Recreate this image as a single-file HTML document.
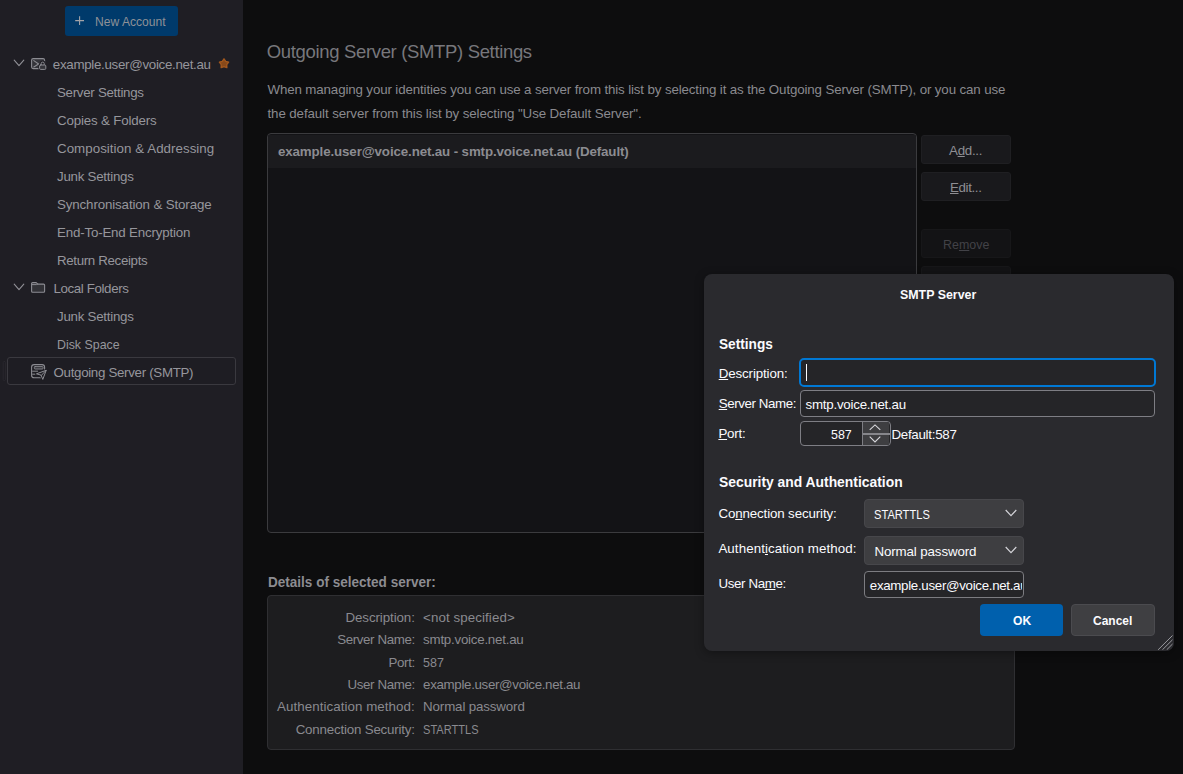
<!DOCTYPE html>
<html><head><meta charset="utf-8"><title>Account Settings</title>
<style>
html,body{margin:0;padding:0;}
body{width:1183px;height:774px;overflow:hidden;background:#0d0d0e;position:relative;font-family:"Liberation Sans",sans-serif;}
.t{position:absolute;white-space:nowrap;line-height:1;font-family:"Liberation Sans",sans-serif;transform-origin:0 50%;display:inline-block;}
.t u{text-decoration:underline;text-underline-offset:1px;text-decoration-thickness:1px;}
.abs{position:absolute;box-sizing:border-box;}
#sidebar{left:0;top:0;width:243px;height:774px;background:#1f1e24;}
#newacct{left:65px;top:6px;width:113px;height:30px;background:#003a6b;border-radius:3px;}
#selrow{left:7px;top:357px;width:229px;height:28px;border:1px solid #3a393f;border-radius:3px;background:#1e1d23;}
#listbox{left:267px;top:133px;width:650px;height:400px;border:1px solid #3b3b3e;border-radius:4px;background:#131316;overflow:hidden;}
#listrow{left:0;top:1px;width:650px;height:33px;background:#1b1b1e;}
.btn{left:921px;width:90px;height:29px;background:#19191c;border:1px solid #1f1f22;border-radius:3px;}
.btn.dis{background:#131315;border-color:#171719;}
#details{left:267px;top:595px;width:748px;height:155px;border:1px solid #2f2f32;border-radius:4px;background:#1d1d1f;}
#dialog{left:704px;top:274px;width:470px;height:377px;background:#2a2a2e;border-radius:8px;box-shadow:0 2px 10px 0 rgba(0,0,0,.35);overflow:hidden;}
.inp{background:#252528;border:1px solid #7e7e84;border-radius:4px;}
.sel{background:#3e3e41;border:1px solid #47474b;border-radius:4px;}
</style></head>
<body>
<div id="sidebar" class="abs"></div>
<div id="newacct" class="abs"></div>
<div id="selrow" class="abs"></div>
<svg class="abs" style="left:0;top:0" width="243" height="400" viewBox="0 0 243 400" fill="none" stroke-linecap="round" stroke-linejoin="round">
  <!-- plus -->
  <path d="M75.2 20.6 H84 M79.6 16.2 V25" stroke="#a3a3a8" stroke-width="1.1" stroke-linecap="butt"/>
  <!-- chevrons -->
  <path d="M14.2 60.2 L19 65.6 L23.8 60.2" stroke="#909096" stroke-width="1.1"/>
  <path d="M14.2 284.2 L19 289.6 L23.8 284.2" stroke="#909096" stroke-width="1.1"/>
  <!-- account icon -->
  <rect x="31.6" y="58.6" width="13" height="10" rx="1.6" fill="#34343a" stroke="#8c8c92" stroke-width="1.1"/>
  <path d="M33.8 60.6 L38.6 64 L33.8 67" stroke="#8c8c92" stroke-width="1.1"/>
  <path d="M41.2 65 V63.6 a1.5 1.5 0 0 1 3 0 V65" stroke="#1f1e24" stroke-width="3"/>
  <rect x="39.6" y="65" width="6.2" height="4.4" rx="1" fill="#34343a" stroke="#1f1e24" stroke-width="2.4"/>
  <path d="M41.2 65 V63.6 a1.5 1.5 0 0 1 3 0 V65" stroke="#8c8c92" stroke-width="1"/>
  <rect x="39.6" y="65" width="6.2" height="4.4" rx="1" fill="#34343a" stroke="#8c8c92" stroke-width="1"/>
  <!-- star -->
  <path d="M224.00 58.80 L225.70 61.35 L228.66 62.19 L226.76 64.60 L226.88 67.66 L224.00 66.60 L221.12 67.66 L221.24 64.60 L219.34 62.19 L222.30 61.35 Z" fill="#87491a" stroke="#a3581d" stroke-width="1.3"/>
  <!-- folder -->
  <path d="M31.6 283.6 a1 1 0 0 1 1 -1 h3.6 l1.6 1.5 h5.8 a1 1 0 0 1 1 1 v6.2 a1 1 0 0 1 -1 1 h-11 a1 1 0 0 1 -1 -1 z" fill="#323237" stroke="#8c8c92" stroke-width="1.1"/>
  <path d="M32 284.6 H36.4 L37.8 284.1" stroke="#8c8c92" stroke-width="1"/>
  <!-- outgoing -->
  <rect x="31.6" y="364.6" width="13" height="13.2" rx="2.6" fill="none" stroke="#8c8c92" stroke-width="1.1"/>
  <rect x="34.3" y="366.6" width="8.8" height="2.4" rx="0.8" fill="#34343a" stroke="#8c8c92" stroke-width="0.9"/>
  <path d="M32.2 371.2 H38 M32.2 374.2 H35.4" stroke="#8c8c92" stroke-width="1" stroke-linecap="butt"/>
  <path d="M36.8 373.7 L46.2 370.3 L42.8 379.4 L41.2 375.5 Z" fill="#1e1d23" stroke="#1e1d23" stroke-width="2.8"/>
  <path d="M36.8 373.7 L46.2 370.3 L42.8 379.4 L41.2 375.5 Z M41.2 375.5 L46.2 370.3" fill="#1e1d23" stroke="#8c8c92" stroke-width="1"/>
  <!-- handle -->
  <rect x="3.2" y="361.4" width="2.2" height="19.2" rx="1.1" fill="none" stroke="#2b2a30" stroke-width="0.8"/>
</svg>

<div id="listbox" class="abs"><div id="listrow" class="abs"></div></div>
<div class="abs btn" style="top:135px"></div>
<div class="abs btn" style="top:172px"></div>
<div class="abs btn dis" style="top:229px"></div>
<div class="abs btn dis" style="top:266px"></div>
<div id="details" class="abs"></div>
<div id="dialog" class="abs"><svg class="abs" style="left:450px;top:356px" width="20" height="20" viewBox="0 0 20 20"><path d="M4.1 19.8 L18.5 5.5 M8.4 19.8 L18.5 9.8 M12.7 19.8 L18.5 14" fill="none" stroke="#9a9a9f" stroke-width="1"/></svg></div>
<div class="abs inp" style="left:799px;top:358px;width:357px;height:29px;border:2px solid #0078d4;border-radius:5px;"></div>
<div class="abs" style="left:805.5px;top:364px;width:1px;height:17px;background:#fbfbfe;"></div>
<div class="abs inp" style="left:800px;top:390px;width:355px;height:27px;"></div>
<div class="abs inp" style="left:800px;top:421px;width:91px;height:25px;overflow:hidden;">
  <div class="abs" style="left:61px;top:0;width:27px;height:23px;background:#3e3e41;border-left:1px solid #7e7e84;"></div>
  <div class="abs" style="left:62px;top:11px;width:27px;height:1.5px;background:#86868b;"></div>
  <svg class="abs" style="left:62px;top:0" width="27" height="23" viewBox="0 0 27 23"><path d="M6.7 7.9 L12 2.9 L17.3 7.9 M6.7 14.7 L12 19.9 L17.3 14.7" fill="none" stroke="#d8d8dd" stroke-width="1.1"/></svg>
</div>
<div class="abs sel" style="left:864px;top:499px;width:160px;height:29px;"></div>
<div class="abs sel" style="left:864px;top:536px;width:160px;height:29px;"></div>
<svg class="abs" style="left:1004px;top:508px" width="14" height="11" viewBox="0 0 14 11"><path d="M1.7 2 L7 7.6 L12.3 2" fill="none" stroke="#d4d4d9" stroke-width="1.15"/></svg>
<svg class="abs" style="left:1004px;top:545px" width="14" height="11" viewBox="0 0 14 11"><path d="M1.7 2 L7 7.6 L12.3 2" fill="none" stroke="#d4d4d9" stroke-width="1.15"/></svg>
<div class="abs inp" style="left:864px;top:571px;width:160px;height:27px;border-color:#7c7c81;">
  <div class="abs" style="left:0;top:0;width:157px;height:25px;overflow:hidden;"><span class="t" style="left:4.8px;top:6.52px;font-size:13.33px;color:#fbfbfe;letter-spacing:-0.317px">example.user@voice.net.au</span></div>
</div>
<div class="abs" style="left:980px;top:604px;width:83px;height:32px;background:#0060ad;border-radius:4px;"></div>
<div class="abs" style="left:1071px;top:604px;width:84px;height:32px;background:#3f3f42;border:1px solid #4b4b4f;border-radius:4px;"></div>
<span class="t" style="left:94.7px;top:15.02px;font-size:13.33px;color:#8e9197;transform:scaleX(0.9075)">New Account</span>
<span class="t" style="left:52.8px;top:57.72px;font-size:13.33px;color:#96969c;letter-spacing:-0.301px">example.user@voice.net.au</span>
<span class="t" style="left:57.0px;top:85.72px;font-size:13.33px;color:#96969c;letter-spacing:-0.295px">Server Settings</span>
<span class="t" style="left:57.0px;top:113.72px;font-size:13.33px;color:#96969c;letter-spacing:-0.177px">Copies &amp; Folders</span>
<span class="t" style="left:57.0px;top:141.72px;font-size:13.33px;color:#96969c;letter-spacing:0.040px">Composition &amp; Addressing</span>
<span class="t" style="left:57.0px;top:169.72px;font-size:13.33px;color:#96969c;letter-spacing:-0.263px">Junk Settings</span>
<span class="t" style="left:57.0px;top:197.72px;font-size:13.33px;color:#96969c;letter-spacing:-0.133px">Synchronisation &amp; Storage</span>
<span class="t" style="left:57.0px;top:225.72px;font-size:13.33px;color:#96969c;letter-spacing:-0.184px">End-To-End Encryption</span>
<span class="t" style="left:57.0px;top:253.72px;font-size:13.33px;color:#96969c;letter-spacing:-0.351px">Return Receipts</span>
<span class="t" style="left:53.5px;top:281.72px;font-size:13.33px;color:#96969c;letter-spacing:-0.386px">Local Folders</span>
<span class="t" style="left:57.0px;top:309.72px;font-size:13.33px;color:#96969c;letter-spacing:-0.263px">Junk Settings</span>
<span class="t" style="left:57.0px;top:337.72px;font-size:13.33px;color:#96969c;transform:scaleX(0.9285)">Disk Space</span>
<span class="t" style="left:53.5px;top:365.72px;font-size:13.33px;color:#96969c;letter-spacing:-0.316px">Outgoing Server (SMTP)</span>
<span class="t" style="left:266.8px;top:43.34px;font-size:18.5px;color:#77777c;letter-spacing:-0.341px">Outgoing Server (SMTP) Settings</span>
<span class="t" style="left:267.5px;top:82.92px;font-size:13.33px;color:#8a8a8f;letter-spacing:-0.135px">When managing your identities you can use a server from this list by selecting it as the Outgoing Server (SMTP), or you can use</span>
<span class="t" style="left:267.5px;top:106.92px;font-size:13.33px;color:#8a8a8f;letter-spacing:-0.108px">the default server from this list by selecting "Use Default Server".</span>
<span class="t" style="left:278.0px;top:144.92px;font-size:13.33px;font-weight:700;color:#8c8c91;letter-spacing:-0.124px">example.user@voice.net.au - smtp.voice.net.au (Default)</span>
<span class="t" style="left:949.0px;top:143.72px;font-size:13.33px;color:#8e8e93;letter-spacing:-0.274px">A<u>d</u>d...</span>
<span class="t" style="left:950.0px;top:180.72px;font-size:13.33px;color:#8e8e93;letter-spacing:-0.368px"><u>E</u>dit...</span>
<span class="t" style="left:942.6px;top:237.72px;font-size:13.33px;color:#424247;transform:scaleX(0.9344)">Re<u>m</u>ove</span>
<span class="t" style="left:267.5px;top:574.58px;font-size:14.67px;font-weight:700;color:#8c8c91;transform:scaleX(0.9236)">Details of selected server:</span>
<span class="t" style="left:345.5px;top:610.72px;font-size:13.33px;color:#8a8a8f;letter-spacing:-0.090px">Description:</span>
<span class="t" style="left:423.1px;top:610.72px;font-size:13.33px;color:#8a8a8f;letter-spacing:0.086px">&lt;not specified&gt;</span>
<span class="t" style="left:337.2px;top:633.12px;font-size:13.33px;color:#8a8a8f;letter-spacing:-0.385px">Server Name:</span>
<span class="t" style="left:423.1px;top:633.12px;font-size:13.33px;color:#8a8a8f;letter-spacing:-0.239px">smtp.voice.net.au</span>
<span class="t" style="left:388.5px;top:655.72px;font-size:13.33px;color:#8a8a8f;letter-spacing:-0.371px">Port:</span>
<span class="t" style="left:423.1px;top:655.72px;font-size:13.33px;color:#8a8a8f;transform:scaleX(0.9393)">587</span>
<span class="t" style="left:347.4px;top:678.02px;font-size:13.33px;color:#8a8a8f;letter-spacing:-0.371px">User Name:</span>
<span class="t" style="left:423.1px;top:678.02px;font-size:13.33px;color:#8a8a8f;letter-spacing:-0.333px">example.user@voice.net.au</span>
<span class="t" style="left:277.0px;top:700.32px;font-size:13.33px;color:#8a8a8f;letter-spacing:0.066px">Authentication method:</span>
<span class="t" style="left:423.1px;top:700.32px;font-size:13.33px;color:#8a8a8f;letter-spacing:-0.140px">Normal password</span>
<span class="t" style="left:295.7px;top:722.72px;font-size:13.33px;color:#8a8a8f;letter-spacing:-0.194px">Connection Security:</span>
<span class="t" style="left:423.1px;top:722.72px;font-size:13.33px;color:#8a8a8f;transform:scaleX(0.8310)">STARTTLS</span>
<span class="t" style="left:900.4px;top:287.52px;font-size:13.33px;font-weight:700;color:#fbfbfe;transform:scaleX(0.9305)">SMTP Server</span>
<span class="t" style="left:718.7px;top:335.98px;font-size:15.5px;font-weight:700;color:#fbfbfe;transform:scaleX(0.8813)">Settings</span>
<span class="t" style="left:718.7px;top:366.82px;font-size:13.33px;color:#fbfbfe;letter-spacing:-0.124px"><u>D</u>escription:</span>
<span class="t" style="left:718.7px;top:397.42px;font-size:13.33px;color:#fbfbfe;letter-spacing:-0.410px"><u>S</u>erver Name:</span>
<span class="t" style="left:805.5px;top:397.62px;font-size:13.33px;color:#fbfbfe;letter-spacing:-0.239px">smtp.voice.net.au</span>
<span class="t" style="left:718.4px;top:427.42px;font-size:13.33px;color:#fbfbfe;letter-spacing:-0.191px"><u>P</u>ort:</span>
<span class="t" style="left:830.5px;top:428.22px;font-size:13.33px;color:#fbfbfe;transform:scaleX(0.9348)">587</span>
<span class="t" style="left:891.4px;top:428.22px;font-size:13.33px;color:#fbfbfe;letter-spacing:-0.270px">Default:587</span>
<span class="t" style="left:719.0px;top:473.68px;font-size:15.5px;font-weight:700;color:#fbfbfe;transform:scaleX(0.8945)">Security and Authentication</span>
<span class="t" style="left:718.4px;top:507.02px;font-size:13.33px;color:#fbfbfe;letter-spacing:-0.129px">Co<u>n</u>nection security:</span>
<span class="t" style="left:874.4px;top:507.72px;font-size:13.33px;color:#fbfbfe;transform:scaleX(0.8340)">STARTTLS</span>
<span class="t" style="left:718.4px;top:542.02px;font-size:13.33px;color:#fbfbfe;letter-spacing:0.084px">Authent<u>i</u>cation method:</span>
<span class="t" style="left:874.4px;top:545.02px;font-size:13.33px;color:#fbfbfe;letter-spacing:-0.114px">Normal password</span>
<span class="t" style="left:718.4px;top:577.02px;font-size:13.33px;color:#fbfbfe;letter-spacing:-0.362px">User Na<u>m</u>e:</span>
<span class="t" style="left:1012.8px;top:613.72px;font-size:13.33px;font-weight:700;color:#fbfbfe;transform:scaleX(0.9050)">OK</span>
<span class="t" style="left:1093.2px;top:613.72px;font-size:13.33px;font-weight:700;color:#fbfbfe;transform:scaleX(0.8989)">Cancel</span>
</body></html>
